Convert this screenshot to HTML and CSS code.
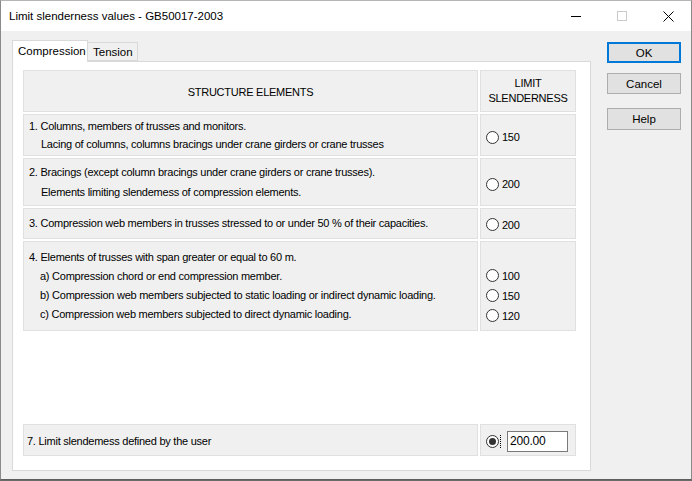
FILE: index.html
```html
<!DOCTYPE html>
<html lang="en">
<head>
  <meta charset="UTF-8">
  <title>Limit slenderness values - GB50017-2003</title>
  <link rel="stylesheet" href="styles.css">
</head>
<body>
  <div class="window">
    <div class="titlebar">
      <span class="title">Limit slenderness values - GB50017-2003</span>
      <div class="controls">
        <div class="ctl">
          <svg width="10" height="10" viewBox="0 0 10 10"><path d="M0 5.5H10" stroke="#000" stroke-width="1"/></svg>
        </div>
        <div class="ctl">
          <svg width="10" height="10" viewBox="0 0 10 10"><rect x="0.5" y="0.5" width="9" height="9" fill="none" stroke="#ccc" stroke-width="1"/></svg>
        </div>
        <div class="ctl">
          <svg width="11" height="11" viewBox="0 0 11 11"><path d="M0.5 0.5L10.5 10.5M10.5 0.5L0.5 10.5" stroke="#000" stroke-width="1"/></svg>
        </div>
      </div>
    </div>

    <div class="client">
      <div class="tab-area">
        <div class="tabs">
          <div class="tab active">Compression</div>
          <div class="tab">Tension</div>
        </div>
        <div class="page">
          <div class="row head">
            <div class="cell">STRUCTURE ELEMENTS</div>
            <div class="cell limit">LIMIT<br>SLENDERNESS</div>
          </div>

          <div class="row r1">
            <div class="cell text">
              <div>1. Columns, members of trusses and monitors.</div>
              <div class="sub">Lacing of columns, columns bracings under crane girders or crane trusses</div>
            </div>
            <div class="cell opts">
              <label class="opt"><input type="radio" name="lim">150</label>
            </div>
          </div>

          <div class="row r2">
            <div class="cell text">
              <div>2. Bracings (except column bracings under crane girders or crane trusses).</div>
              <div class="sub">Elements limiting slendemess of compression elements.</div>
            </div>
            <div class="cell opts">
              <label class="opt"><input type="radio" name="lim">200</label>
            </div>
          </div>

          <div class="row r3">
            <div class="cell text">
              <div>3. Compression web members in trusses stressed to or under 50 % of their capacities.</div>
            </div>
            <div class="cell opts">
              <label class="opt"><input type="radio" name="lim">200</label>
            </div>
          </div>

          <div class="row r4">
            <div class="cell text">
              <div>4. Elements of trusses with span greater or equal to 60 m.</div>
              <div class="sub">a) Compression chord or end compression member.</div>
              <div class="sub">b) Compression web members subjected to static loading or indirect dynamic loading.</div>
              <div class="sub">c) Compression web members subjected to direct dynamic loading.</div>
            </div>
            <div class="cell opts">
              <label class="opt"><input type="radio" name="lim">100</label>
              <label class="opt"><input type="radio" name="lim">150</label>
              <label class="opt"><input type="radio" name="lim">120</label>
            </div>
          </div>

          <div class="row r7">
            <div class="cell text">
              <div>7. Limit slendemess defined by the user</div>
            </div>
            <div class="cell opts">
              <label class="opt user"><input type="radio" name="lim" checked><span class="focus"></span></label>
              <input type="text" class="value" value="200.00">
            </div>
          </div>
        </div>
      </div>

      <div class="buttons">
        <button class="btn default">OK</button>
        <button class="btn cancel">Cancel</button>
        <button class="btn help">Help</button>
      </div>
    </div>
  </div>
</body>
</html>
```

FILE: styles.css
```css
html, body {
  margin: 0;
  padding: 0;
  background-color: #6b6b6b;
}
body {
  font-family: "Liberation Sans", Arial, sans-serif;
  font-size: 11px;
  letter-spacing: -0.25px;
  color: #000;
}
.window {
  width: 692px;
  height: 480px;
  box-sizing: border-box;
  border: 1px solid #8a8a8a;
  border-top-color: #b5b5b5;
  border-bottom-color: #5e5e5e;
  background-color: #f0f0f0;
  display: flex;
  flex-direction: column;
}
.titlebar {
  height: 30px;
  background-color: #fff;
  display: flex;
  align-items: center;
  justify-content: space-between;
}
.title {
  font-family: "Liberation Sans", Arial, sans-serif;
  font-size: 11.5px;
  letter-spacing: 0;
  padding-left: 8px;
  padding-bottom: 1px;
}
.controls {
  display: flex;
  height: 30px;
}
.ctl {
  width: 46px;
  height: 30px;
  display: flex;
  align-items: center;
  justify-content: center;
}
.client {
  flex: 1;
  display: flex;
  padding: 9px 0 0 11px;
}
.tabs {
  display: flex;
  align-items: flex-end;
  height: 21px;
  position: relative;
  z-index: 1;
}
.tab {
  box-sizing: border-box;
  border: 1px solid #d9d9d9;
  background-color: #f0f0f0;
  height: 19px;
  padding: 0 4px 0 5px;
  line-height: 18px;
  font-size: 11.5px;
  letter-spacing: 0;
}
.tab.active {
  background-color: #fff;
  height: 22px;
  margin-bottom: -1px;
  border-bottom: none;
  line-height: 21px;
  width: 76px;
  text-align: center;
}
.tab + .tab {
  margin-left: -1px;
}
.page {
  box-sizing: border-box;
  width: 579px;
  height: 410px;
  border: 1px solid #d9d9d9;
  background-color: #fff;
  padding: 8px 0 14px 10px;
  display: flex;
  flex-direction: column;
  gap: 2px;
}
.row {
  display: grid;
  grid-template-columns: 455px 96px;
  gap: 2px;
}
.cell {
  box-sizing: border-box;
  border: 1px solid #e0e0e0;
  background-color: #f0f0f0;
}
.head {
  height: 42px;
}
.head .cell {
  display: flex;
  align-items: center;
  justify-content: center;
  text-align: center;
  padding-top: 2px;
}
.head .limit {
  line-height: 15px;
  padding-top: 0;
}
.text {
  display: flex;
  flex-direction: column;
  justify-content: center;
  padding-left: 5px;
  line-height: 19px;
}
.sub {
  padding-left: 12px;
}
.r4 .sub {
  padding-left: 11px;
}
.opts {
  display: flex;
  flex-direction: column;
  justify-content: center;
  padding: 4px 0 0 5px;
}
.opt {
  display: flex;
  align-items: center;
  gap: 3px;
  height: 19px;
}
input[type="radio"] {
  appearance: none;
  margin: 0;
  width: 13px;
  height: 13px;
  box-sizing: border-box;
  border: 1px solid #333;
  border-radius: 50%;
  background-color: #fff;
  position: relative;
}
input[type="radio"]:checked::after {
  content: "";
  position: absolute;
  left: 2px;
  top: 2px;
  width: 7px;
  height: 7px;
  border-radius: 50%;
  background-color: #333;
}
.r1 {
  height: 42px;
}
.r1 .text {
  line-height: 18px;
}
.r2 {
  height: 48px;
}
.r2 .text {
  line-height: 20px;
}
.r3 {
  height: 31px;
}
.r3 .opts {
  padding-top: 2px;
}
.r4 {
  height: 90px;
}
.r4 .opts {
  justify-content: flex-start;
  padding-top: 24px;
  gap: 1px;
}
.r7 {
  height: 32px;
  margin-top: auto;
}
.r7 .text {
  padding-left: 3px;
  padding-top: 2px;
}
.r7 .opts {
  flex-direction: row;
  justify-content: flex-start;
  align-items: center;
  padding-top: 2px;
}
.opt.user {
  gap: 1px;
}
.focus {
  width: 1px;
  height: 13px;
  border-left: 1px dotted #000;
}
.value {
  box-sizing: border-box;
  width: 61px;
  height: 21px;
  margin: 0 0 0 5px;
  padding: 0 2px;
  border: 1px solid #7a7a7a;
  background-color: #fff;
  font-family: "Liberation Sans", Arial, sans-serif;
  font-size: 12px;
  letter-spacing: -0.2px;
  color: #000;
}
.buttons {
  display: flex;
  flex-direction: column;
  margin: 2px 0 0 16px;
}
.btn {
  box-sizing: border-box;
  width: 74px;
  height: 21px;
  border: 1px solid #adadad;
  background-color: #e1e1e1;
  font-family: "Liberation Sans", Arial, sans-serif;
  font-size: 11.5px;
  letter-spacing: 0;
  color: #000;
  padding: 0;
  cursor: pointer;
}
.btn.default {
  border: 2px solid #0078d7;
}
.btn.cancel {
  margin-top: 10px;
}
.btn.help {
  margin-top: 14px;
  height: 22px;
}
```
